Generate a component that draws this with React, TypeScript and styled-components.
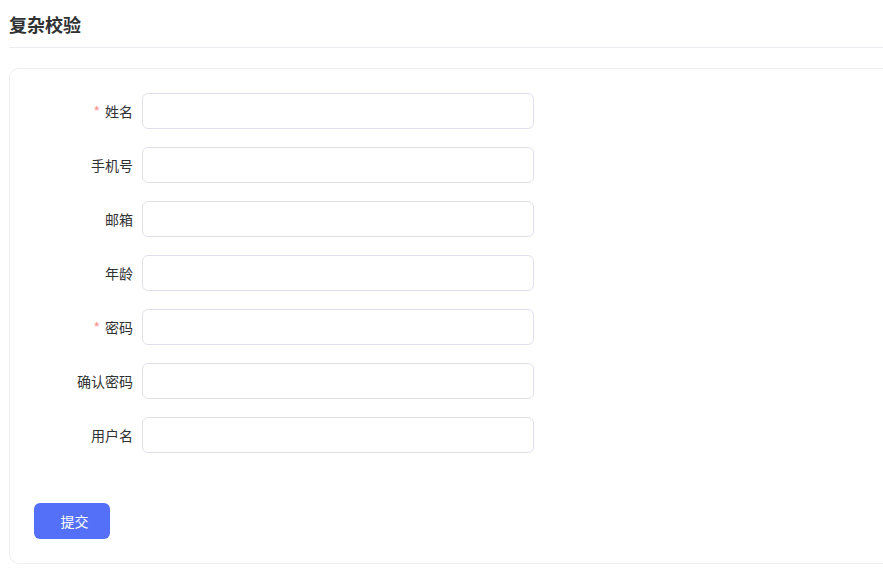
import React from "react";
import styled, { createGlobalStyle } from "styled-components";

const Global = createGlobalStyle`
  html, body { margin: 0; padding: 0; background: #fff; overflow: hidden; }
  body { font-family: "Noto Sans CJK SC", "Noto Sans", sans-serif; color: #303133; }
`;

const Page = styled.div`
  padding: 12px 0 0 9px;
  width: 900px;
`;

const Title = styled.h2`
  margin: 0;
  font-size: 18px;
  line-height: 24px;
  font-weight: 700;
  color: #303133;
  padding-bottom: 11px;
  border-bottom: 1px solid #ebedf2;
`;

const Card = styled.div`
  margin-top: 20px;
  border: 1px solid #eeeff3;
  border-radius: 10px;
  padding: 24px;
`;

const Row = styled.div`
  display: flex;
  align-items: center;
  margin-bottom: 18px;
`;

const Label = styled.label`
  width: 99px;
  padding-right: 10px;
  text-align: right;
  font-size: 14px;
  line-height: 36px;
  color: #303133;
`;

const Star = styled.span`
  color: #f78f8f;
  margin-right: 5px;
`;

const Input = styled.input`
  box-sizing: border-box;
  width: 392px;
  height: 36px;
  margin-left: -1px;
  border: 1px solid #dfe0ec;
  border-radius: 6px;
  outline: none;
  padding: 0 12px;
  font-size: 14px;
  background: #fff;
`;

const Actions = styled.div`
  padding-top: 32px;
`;

const Button = styled.button`
  width: 76px;
  height: 36px;
  border: none;
  border-radius: 6px;
  background: #5470f8;
  color: #fff;
  font-size: 14px;
  font-family: inherit;
  padding: 0 0 0 5px;
  cursor: pointer;
`;

const fields: { label: string; required?: boolean; type?: string }[] = [
  { label: "姓名", required: true },
  { label: "手机号" },
  { label: "邮箱" },
  { label: "年龄" },
  { label: "密码", required: true, type: "password" },
  { label: "确认密码", type: "password" },
  { label: "用户名" },
];

export default function App() {
  return (
    <>
      <Global />
      <Page>
        <Title>复杂校验</Title>
        <Card>
          {fields.map((f) => (
            <Row key={f.label}>
              <Label>
                {f.required && <Star>*</Star>}
                {f.label}
              </Label>
              <Input type={f.type ?? "text"} />
            </Row>
          ))}
          <Actions>
            <Button>提交</Button>
          </Actions>
        </Card>
      </Page>
    </>
  );
}
